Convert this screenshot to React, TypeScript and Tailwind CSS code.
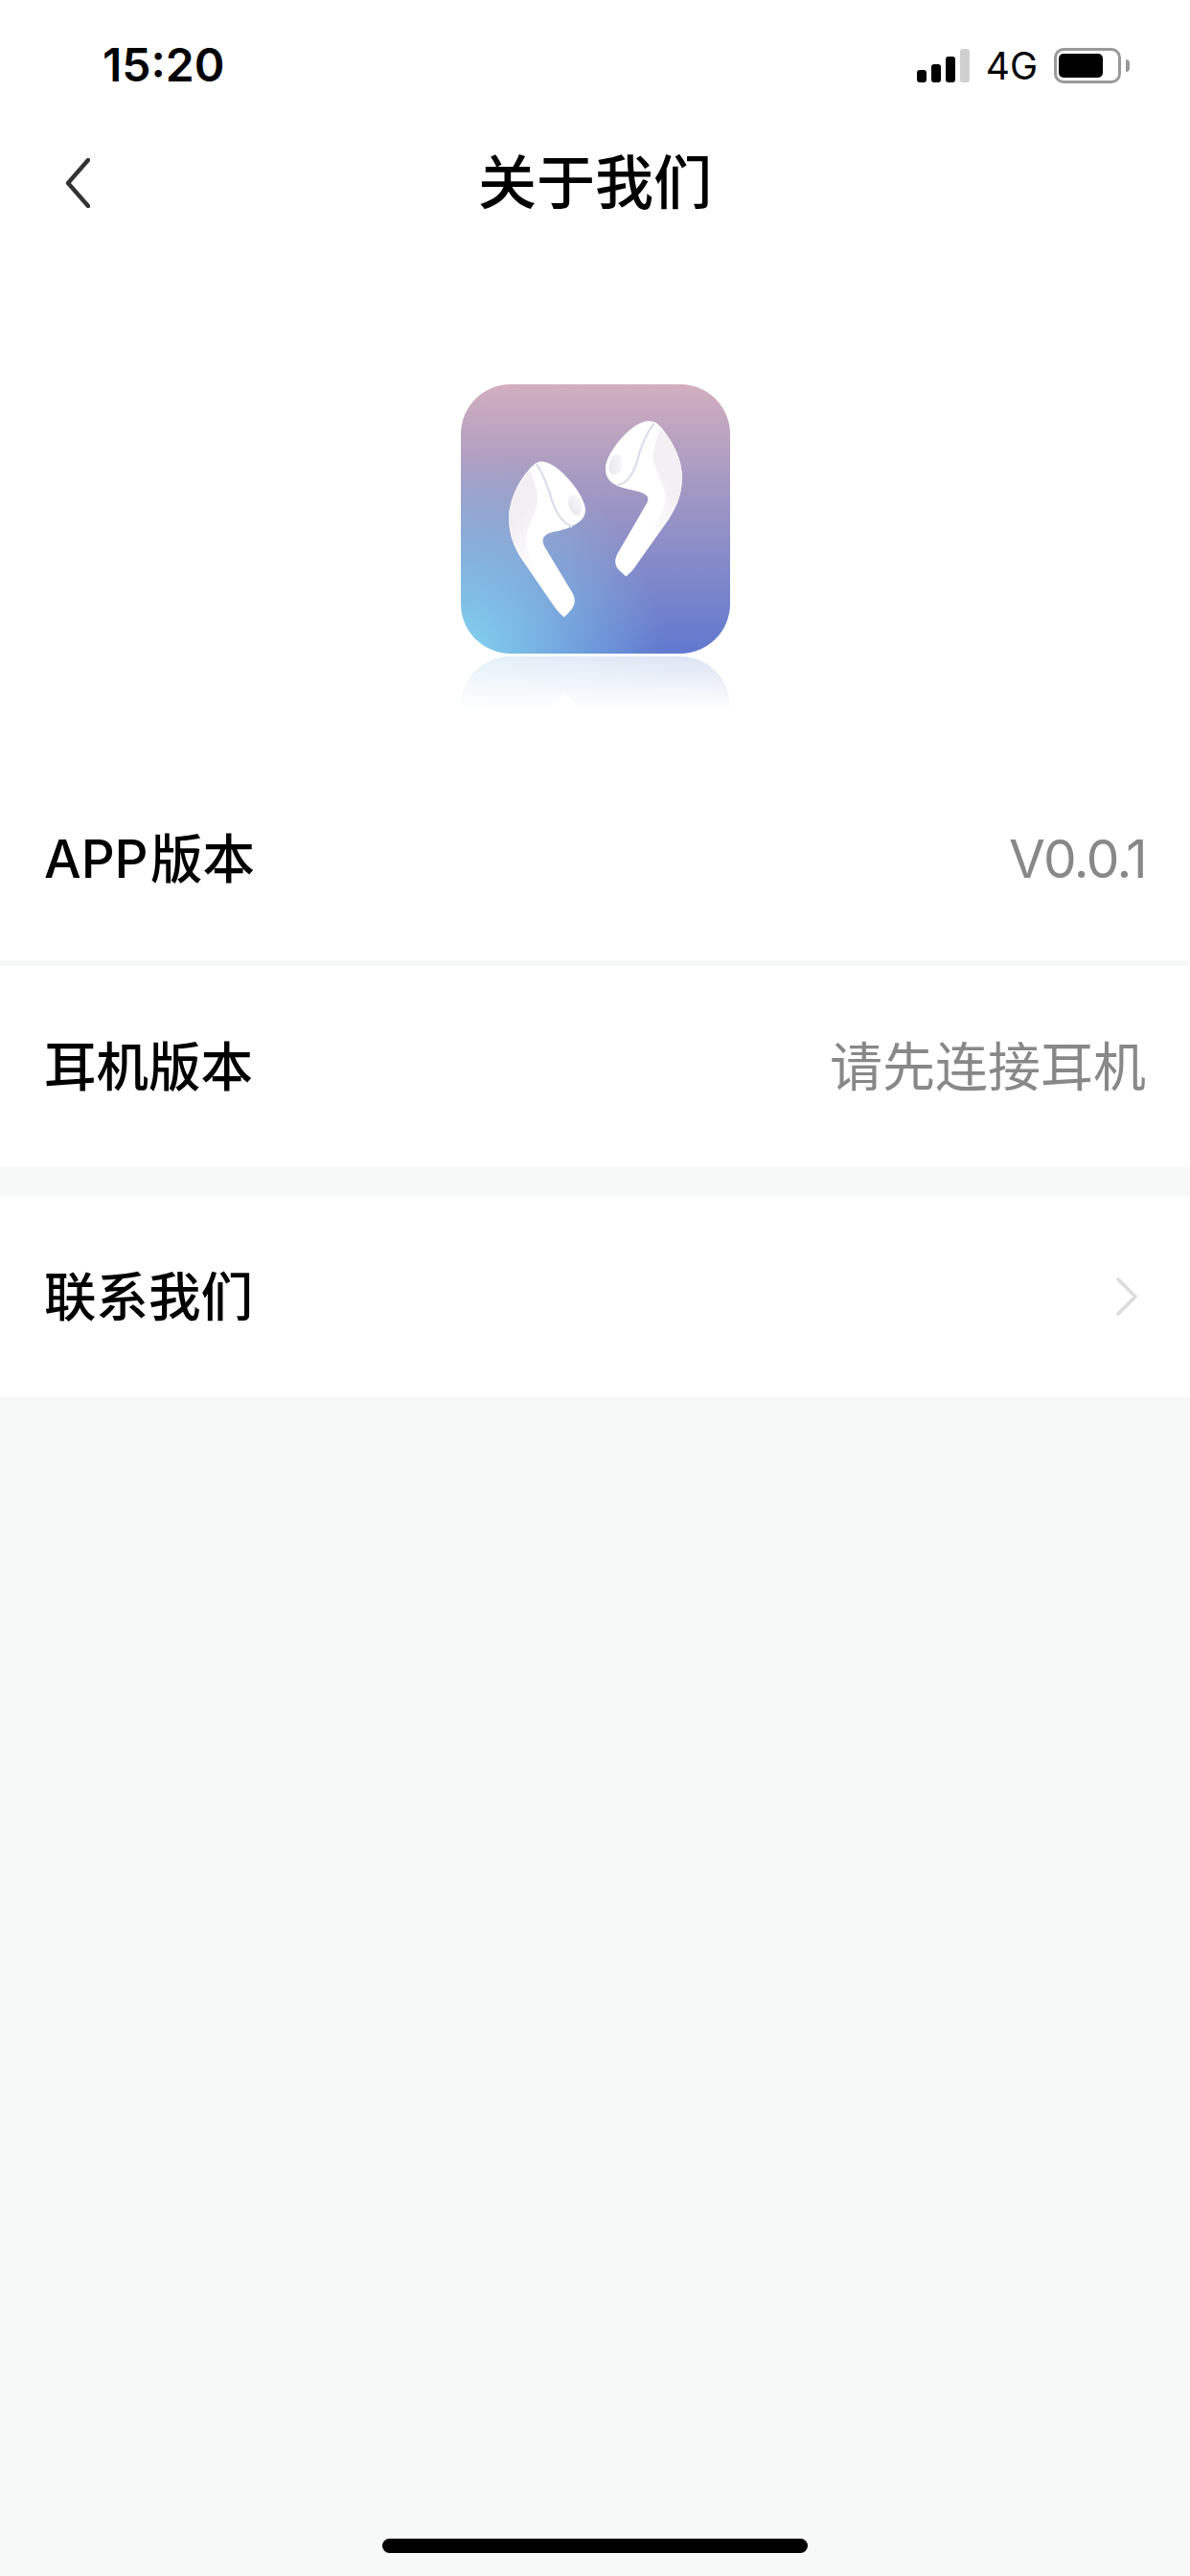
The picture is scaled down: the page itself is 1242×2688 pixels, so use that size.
const font = "font-['Inter','Noto_Sans_CJK_SC',sans-serif]";

const Row = ({ label, children }: { label: string; children?: React.ReactNode }) => (
  <div className="flex items-center justify-between bg-white pl-[46px] pr-[46px] h-full">
    <span className="text-[54.5px] leading-none font-medium text-black [word-spacing:-12px]">{label}</span>
    {children}
  </div>
);

const Earbuds = () => (
  <svg viewBox="92 63 843 844" className="absolute inset-0 w-full h-full">
    <defs>
      <linearGradient id="shadeL" x1="0" y1="0" x2="0.4" y2="1">
        <stop offset="0.45" stopColor="#f2eff3" />
        <stop offset="1" stopColor="#ffffff" />
      </linearGradient>
      <linearGradient id="shadeR" x1="0.8" y1="0" x2="0.2" y2="1">
        <stop offset="0.4" stopColor="#f3f0f3" />
        <stop offset="1" stopColor="#ffffff" />
      </linearGradient>
      <linearGradient id="spot" x1="0" y1="0.8" x2="1" y2="0.2">
        <stop offset="0" stopColor="#e8e7ed" />
        <stop offset="1" stopColor="#f8f7f9" />
      </linearGradient>
    </defs>
    {/* left bud */}
    <path
      d="M345 305C395 305 482 410 482 458C482 495 435 515 385 525C350 532 342 548 354 572L440 715C458 745 445 768 415 793C398 780 385 762 372 742L285 615C255 570 242 530 242 482C242 420 280 350 320 315C328 308 336 305 345 305Z"
      fill="#ffffff"
    />
    <path
      d="M307 330C318 360 332 390 332 425C332 470 295 505 295 550C295 590 325 640 362 690L285 615C255 570 242 530 242 482C242 425 272 372 307 330Z"
      fill="url(#shadeL)"
    />
    <path d="M328 312C350 345 365 385 378 430C392 472 412 498 440 510" fill="none" stroke="#dcdfec" strokeWidth="7" />
    <ellipse cx="450" cy="442" rx="20" ry="33" transform="rotate(-18 450 442)" fill="url(#spot)" />
    {/* right bud */}
    <path
      d="M680 178C700 178 712 188 725 205C760 250 785 300 785 355C785 405 770 445 740 490L645 625C632 645 622 655 610 665C585 645 565 630 582 595L672 440C688 415 672 405 640 397C600 388 543 380 545 325C547 275 630 178 680 178Z"
      fill="#ffffff"
    />
    <path
      d="M718 203C705 235 693 265 695 295C697 335 732 375 732 420C732 460 700 510 662 565L740 490C770 445 785 405 785 355C785 300 760 250 718 203Z"
      fill="url(#shadeR)"
    />
    <path d="M697 185C670 222 655 260 645 300C632 345 615 372 582 380" fill="none" stroke="#dcdfec" strokeWidth="7" />
    <ellipse cx="577" cy="314" rx="20" ry="33" transform="rotate(14 577 314)" fill="url(#spot)" />
  </svg>
);

export default function App() {
  return (
    <div className={`${font} flex flex-col min-h-[2688px] bg-[#f7f9f8]`}>
      <div className="bg-white">
        {/* status bar */}
        <div className="flex items-center justify-between h-[136px] pl-[107px] pr-[63px]">
          <span className="text-[48px] leading-none font-semibold text-black">15:20</span>
          <div className="flex items-center">
            <div className="flex items-end gap-[5px] h-[35px] mr-[17px]">
              <div className="w-[10px] h-[13px] rounded-[3px] bg-black" />
              <div className="w-[10px] h-[19px] rounded-[3px] bg-black" />
              <div className="w-[10px] h-[27px] rounded-[3px] bg-black" />
              <div className="w-[10px] h-[35px] rounded-[3px] bg-[#cfcfcf]" />
            </div>
            <span className="text-[39px] leading-none font-normal text-black mr-[17px]">4G</span>
            <div className="flex items-center">
              <div className="w-[70px] h-[37px] rounded-[10px] border-[3px] border-[#999999] px-[2px] py-[3px]">
                <div className="w-[46px] h-full rounded-[5px] bg-black" />
              </div>
              <div className="w-[4px] h-[13px] ml-[5px] rounded-r-full bg-[#999999]" />
            </div>
          </div>
        </div>
        {/* nav */}
        <div className="relative flex items-center justify-center h-[110px]">
          <svg viewBox="0 0 26 52" className="absolute left-[68px] top-[29px] w-[26px] h-[52px]" fill="none">
            <path d="M24 2L3 26L24 50" stroke="#333333" strokeWidth="4.4" strokeLinecap="round" strokeLinejoin="round" />
          </svg>
          <span className="text-[61px] leading-none font-medium text-black">关于我们</span>
        </div>
        {/* logo */}
        <div className="flex flex-col items-center pt-[155px] pb-[49px]">
          <div className="relative w-[281px] h-[281px] rounded-[52px] bg-[radial-gradient(circle_at_0%_100%,rgba(132,212,240,1)_0%,rgba(132,212,240,0.55)_24%,rgba(132,212,240,0)_53%),linear-gradient(180deg,#d3aebf_0%,#aa9cc2_32%,#6079cf_100%)]">
            <Earbuds />
          </div>
          {/* reflection */}
          <div className="relative mt-[3px] w-[281px] h-[56px] rounded-t-[52px] bg-[linear-gradient(180deg,rgba(255,255,255,0)_0%,#ffffff_100%),linear-gradient(90deg,#e6f2fa_0%,#dbe2f3_100%)]">
            <svg viewBox="0 0 281 56" className="absolute inset-0 w-full h-full">
              <path d="M93 56L108 37L124 56Z" fill="#ffffff" />
            </svg>
          </div>
        </div>
      </div>

      <div className="h-[212px]">
        <Row label="APP 版本">
          <span className="text-[55px] leading-none font-normal text-[#888888] tracking-[-1.5px]">V0.0.1</span>
        </Row>
      </div>
      <div className="h-[210px] mt-[6px]">
        <Row label="耳机版本">
          <span className="text-[55px] leading-none font-normal text-[#888888]">请先连接耳机</span>
        </Row>
      </div>
      <div className="h-[210px] mt-[30px]">
        <Row label="联系我们">
          <svg viewBox="0 0 24 40" className="w-[24px] h-[40px] mr-[8px]" fill="none">
            <path d="M3 2L21 20L3 38" stroke="#dcdcdc" strokeWidth="3.6" strokeLinecap="round" strokeLinejoin="round" />
          </svg>
        </Row>
      </div>

      <div className="mt-auto flex justify-center pb-6">
        <div className="w-[444px] h-[15px] rounded-full bg-black" />
      </div>
    </div>
  );
}
